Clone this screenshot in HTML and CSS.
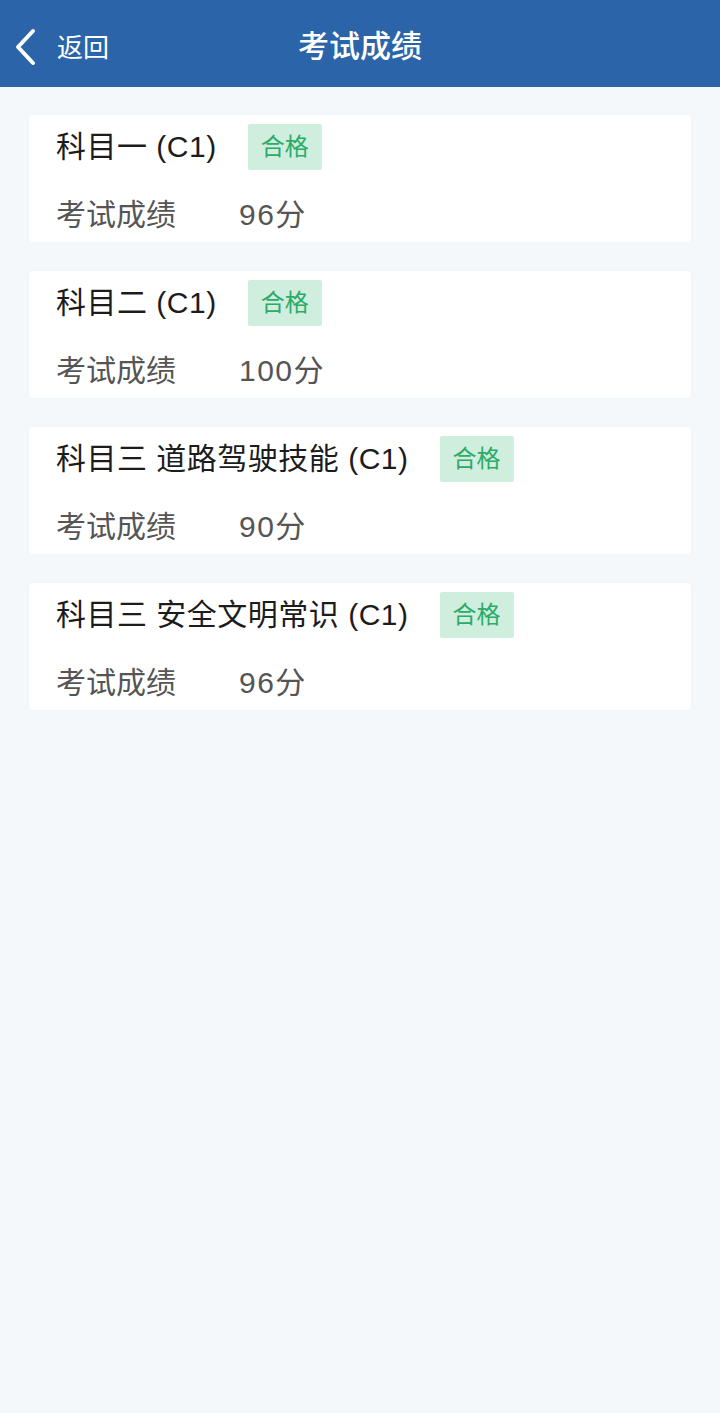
FILE: index.html
```html
<!DOCTYPE html>
<html lang="zh-CN">
<head>
<meta charset="utf-8">
<title>考试成绩</title>
<link rel="stylesheet" href="styles.css">
</head>
<body>
<header class="topbar">
  <div class="back">
    <svg class="back-icon" width="24" height="38" viewBox="0 0 24 38"><path d="M20 3 L5 19 L20 35" fill="none" stroke="#fff" stroke-width="4" stroke-linecap="round" stroke-linejoin="round"/></svg>
    <span class="back-text">返回</span>
  </div>
  <h1 class="title">考试成绩</h1>
</header>
<main class="list">
  <section class="card">
    <div class="card-head"><span class="subject">科目一 (C1)</span><span class="badge">合格</span></div>
    <div class="score"><span class="label">考试成绩</span><span class="value">96分</span></div>
  </section>
  <section class="card">
    <div class="card-head"><span class="subject">科目二 (C1)</span><span class="badge">合格</span></div>
    <div class="score"><span class="label">考试成绩</span><span class="value">100分</span></div>
  </section>
  <section class="card">
    <div class="card-head"><span class="subject">科目三 道路驾驶技能 (C1)</span><span class="badge">合格</span></div>
    <div class="score"><span class="label">考试成绩</span><span class="value">90分</span></div>
  </section>
  <section class="card">
    <div class="card-head"><span class="subject">科目三 安全文明常识 (C1)</span><span class="badge">合格</span></div>
    <div class="score"><span class="label">考试成绩</span><span class="value">96分</span></div>
  </section>
</main>
</body>
</html>
```
FILE: styles.css
```css
html, body {
  margin: 0;
  padding: 0;
}
body {
  background: #f4f8fa;
  font-family: "Liberation Sans", "Noto Sans CJK SC", sans-serif;
  width: 720px;
  min-height: 1413px;
}
.topbar {
  height: 87px;
  background: #2c64a9;
  display: flex;
  align-items: center;
  justify-content: center;
  position: relative;
  color: #fff;
}
.back {
  position: absolute;
  left: 13px;
  top: 0;
  height: 87px;
  display: flex;
  align-items: center;
}
.back-icon {
  display: block;
  margin-top: 6px;
}
.back-text {
  font-size: 26px;
  margin-left: 20px;
  margin-top: 4px;
}
.title {
  margin: 0;
  font-size: 31px;
  font-weight: 500;
  margin-top: 0;
}
.list {
  padding: 28px 29px;
  display: flex;
  flex-direction: column;
  gap: 29px;
}
.card {
  background: #fff;
  border-radius: 4px;
  box-shadow: 0 0 6px rgba(0, 0, 0, 0.025);
  padding: 9px 27px 10px;
  display: flex;
  flex-direction: column;
  gap: 22px;
}
.card-head {
  display: flex;
  align-items: center;
  height: 46px;
}
.subject {
  font-size: 30px;
  letter-spacing: 0.5px;
  color: #1c1c1c;
  line-height: 40px;
}
.badge {
  margin-left: 31px;
  background: #cfeedd;
  color: #2cab68;
  font-size: 24px;
  height: 46px;
  line-height: 46px;
  padding: 0 13px;
  border-radius: 2px;
}
.score {
  display: flex;
  align-items: center;
  height: 40px;
  font-size: 30px;
  color: #555;
}
.label {
  width: 183px;
}
.value {
  letter-spacing: 1.5px;
}
```
